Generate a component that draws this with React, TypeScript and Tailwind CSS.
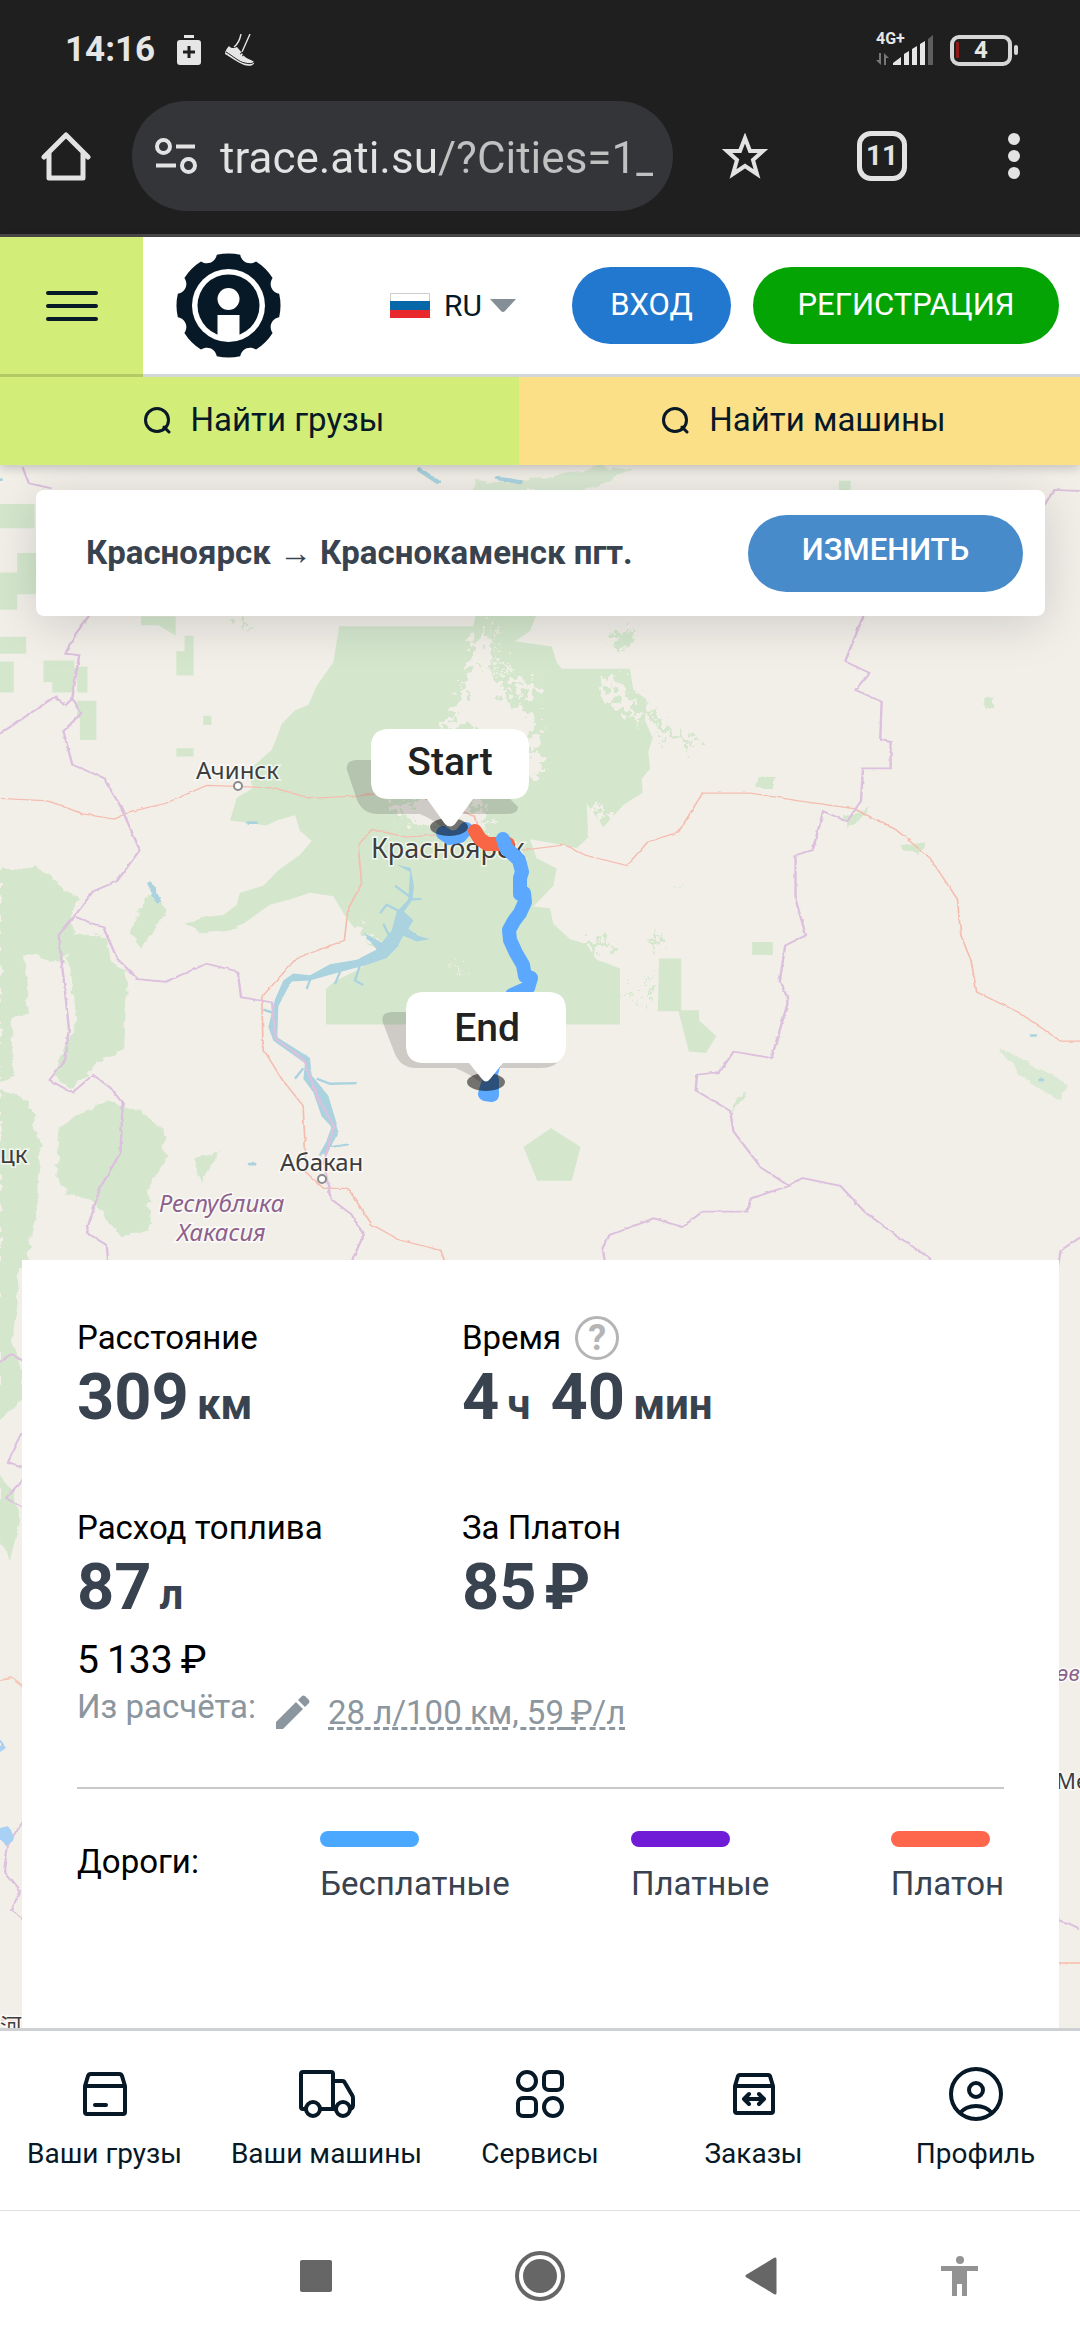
import type { ReactNode } from 'react';

const gearPath = () => {
  const point = (deg: number, r: number) => {
    const a = (deg * Math.PI) / 180;
    return `${(52.5 + r * Math.sin(a)).toFixed(2)} ${(52.5 - r * Math.cos(a)).toFixed(2)}`;
  };
  let d = `M${point(-13, 52)}`;
  for (let i = 0; i < 8; i++) {
    const base = i * 45;
    d += `A52 52 0 0 1 ${point(base + 13, 52)}`;
    d += `C${point(base + 17, 45)} ${point(base + 28, 45)} ${point(base + 32, 52)}`;
  }
  return d + 'Z';
};

const roadTypes = [
  { name: 'Бесплатные', color: 'bg-[#4aa8ff]' },
  { name: 'Платные', color: 'bg-[#701cd6]' },
  { name: 'Платон', color: 'bg-[#ff674d]' },
];

const navItems: { name: string; icon: ReactNode }[] = [
  {
    name: 'Ваши грузы',
    icon: (
      <>
        <path d="M8 20V46a2 2 0 0 0 2 2H46a2 2 0 0 0 2-2V20ZM8 20L11 10a3 3 0 0 1 3-2H42a3 3 0 0 1 3 2L48 20" />
        <path d="M18 39H29" />
      </>
    ),
  },
  {
    name: 'Ваши машины',
    icon: (
      <>
        <path d="M7 43H4a2 2 0 0 1-2-2V8a2 2 0 0 1 2-2H32a2 2 0 0 1 2 2V43H21M34 15H43a3 3 0 0 1 3 2L53 29a5 5 0 0 1 1 3V39a4 4 0 0 1-3 4M37 43H34" />
        <circle cx="14" cy="43" r="7" />
        <circle cx="44" cy="43" r="7" />
      </>
    ),
  },
  {
    name: 'Сервисы',
    icon: (
      <>
        <circle cx="15" cy="15" r="9" />
        <rect x="32" y="6" width="18" height="18" rx="5" />
        <rect x="6" y="32" width="18" height="18" rx="5" />
        <circle cx="41" cy="41" r="9" />
      </>
    ),
  },
  {
    name: 'Заказы',
    icon: (
      <>
        <path d="M9 20V45a2 2 0 0 0 2 2H45a2 2 0 0 0 2-2V20ZM9 20L12 10a2 2 0 0 1 2-1H42a2 2 0 0 1 2 1L47 20" />
        <path d="M18 33H38M23 28L18 33L23 38M33 28L38 33L33 38" />
      </>
    ),
  },
  {
    name: 'Профиль',
    icon: (
      <>
        <circle cx="28" cy="28" r="25" />
        <circle cx="28" cy="24" r="7" />
        <path d="M12 47Q18 40 28 40T44 47" />
      </>
    ),
  },
];

function SearchIcon() {
  return (
    <svg viewBox="0 0 28 28" className="size-7" fill="none" stroke="currentColor" strokeWidth="3" strokeLinecap="round">
      <circle cx="14" cy="14" r="11.500" />
      <path d="M21 21L26 26" />
    </svg>
  );
}

function StatusBar() {
  return (
    <div className="flex h-[100px] items-center pr-[62px] pl-[65px] text-[#e6e6e6]">
      <span className="text-[35px] font-bold">14:16</span>
      <svg viewBox="0 0 24 30" className="ml-[22px] h-[30px] w-6">
        <path fill="currentColor" fillRule="evenodd" d="M7 0H17V3H7ZM3 5H21a3 3 0 0 1 3 3V27a3 3 0 0 1-3 3H3a3 3 0 0 1-3-3V8a3 3 0 0 1 3-3ZM10.500 11V15.500H6V18.500H10.500V23H13.500V18.500H18V15.500H13.500V11Z" />
      </svg>
      <svg viewBox="0 0 30 32" className="ml-6 h-8 w-[30px]" fill="none" stroke="currentColor">
        <path strokeWidth="1.400" d="M16 0C15 5 13 10 9 13M25 0L17 18" />
        <path fill="currentColor" stroke="none" d="M4 12C6 15 10 14 12 13C14 16 17 18 18 21C21 25 28 26 29 28C30 31 24 33 19 31C12 28 5 23 0 20C0 17 2 14 4 12Z" />
        <path stroke="#1f1f1f" strokeWidth="1" d="M1 18C8 22 14 28 20 29C24 30 27 30 29 28M15 20L18 18M17 22L20 20" />
      </svg>

      <div className="ml-auto flex items-center gap-4">
        <div className="relative">
          <svg viewBox="0 0 58 30" className="h-[30px] w-[58px]" fill="currentColor">
            <path fill="#777" d="M3 18H5V30L0 25H3ZM8 30V18L13 23H10V30Z" />
            <path d="M17 30V28L25 22V30ZM28 30V19L33 16V30ZM36 30V14L41 11V30ZM44 30V9L49 6V30Z" />
            <path fill="#5e5e5e" d="M52 30V4L57 0V30Z" />
          </svg>
          <span className="absolute -top-1 left-0 text-base leading-4 font-bold">4G+</span>
        </div>
        <div className="flex items-center gap-0.5">
          <div className="relative flex h-[31px] w-[62px] items-center justify-center rounded-[9px] border-4 border-[#d6d6d6] text-2xl font-bold">
            <span className="absolute left-0.5 h-4 w-[3px] bg-[#8e1a16]" />4
          </div>
          <span className="h-2.5 w-1 rounded-xs bg-[#d6d6d6]" />
        </div>
      </div>
    </div>
  );
}

function BrowserBar() {
  return (
    <div className="flex h-28 items-center text-[#e3e3e3]">
      <button aria-label="Домой" className="flex w-[132px] justify-center">
        <svg viewBox="0 0 50 50" className="size-[50px]" fill="none" stroke="currentColor" strokeWidth="5" strokeLinejoin="round" strokeLinecap="round">
          <path d="M3 26L25 4L47 26M8 22V47H42V22" />
        </svg>
      </button>
      <div className="flex h-[110px] flex-1 items-center rounded-full bg-[#343539] pr-5 pl-[23px]">
        <svg viewBox="0 0 42 36" className="h-9 w-[42px]" fill="none" stroke="currentColor" strokeWidth="4">
          <circle cx="8.500" cy="8.500" r="6.500" />
          <path d="M21 8.500H40M1 27.500H21" />
          <circle cx="33.500" cy="27.500" r="6.500" />
        </svg>
        <input
          aria-label="Адрес"
          defaultValue="trace.ati.su/?Cities=1_"
          className="ml-[23px] w-0 flex-1 bg-[linear-gradient(to_right,#e3e3e3_219px,#bfc2c1_219px)] bg-clip-text pt-1 text-[44px] text-transparent outline-none"
        />
      </div>
      <button aria-label="В закладки" className="flex w-36 justify-center">
        <svg viewBox="0 0 48 46" className="h-[46px] w-12" fill="none" stroke="currentColor" strokeWidth="4">
          <path d="M24 5L29 18H42L32 27L36 41L24 33L12 41L16 27L6 18H19Z" />
        </svg>
      </button>
      <button aria-label="Вкладки" className="flex w-[130px] justify-center">
        <span className="flex size-[50px] items-center justify-center rounded-[14px] border-[5px] border-[#e3e3e3] text-[28px] font-bold">
          11
        </span>
      </button>
      <button aria-label="Меню браузера" className="flex w-[133px] flex-col items-center gap-[5px]">
        <span className="size-3 rounded-full bg-[#e3e3e3]" />
        <span className="size-3 rounded-full bg-[#e3e3e3]" />
        <span className="size-3 rounded-full bg-[#e3e3e3]" />
      </button>
    </div>
  );
}

function SiteHeader() {
  return (
    <header className="relative z-10 shadow-[0_3px_10px_rgba(0,0,0,0.2)]">
      <div className="flex h-[140px] bg-white">
        <button aria-label="Меню" className="flex w-[143px] items-center justify-center border-b-[3px] border-[#b2c966] bg-[#d2ed78]">
          <svg viewBox="0 0 52 32" className="h-8 w-[52px]" stroke="#071826" strokeWidth="4" strokeLinecap="round">
            <path d="M2 3H50M2 16H50M2 29H50" />
          </svg>
        </button>
        <div className="flex flex-1 items-center border-b-[3px] border-[#d4d7d9] pr-[21px] pl-[33px]">
          <a href="#" aria-label="ATI.SU">
            <svg viewBox="0 0 105 105" className="size-[105px]">
              <path fill="#071826" d={gearPath()} />
              <circle cx="52.500" cy="52.500" r="36.500" fill="#fff" />
              <circle cx="52.500" cy="52.500" r="31" fill="#071826" />
              <circle cx="52.500" cy="46" r="11" fill="#fff" />
              <path fill="#fff" d="M41.500 62H63.500V84H41.500Z" />
            </svg>
          </a>
          <label className="relative ml-auto flex items-center">
            <svg viewBox="0 0 40 25" className="h-[25px] w-10">
              <path fill="#fff" stroke="#ccc" d="M0.500 0.500H39.500V24H0.500Z" />
              <path fill="#0768a9" d="M0 8H40V17H0Z" />
              <path fill="#e8282d" d="M0 17H40V25H0Z" />
            </svg>
            <select aria-label="Язык" className="w-[86px] appearance-none bg-transparent pl-3.5 text-[30px] text-[#071826]">
              <option>RU</option>
              <option>EN</option>
            </select>
            <svg viewBox="0 0 26 13" className="pointer-events-none absolute right-0 h-[13px] w-[26px]">
              <path fill="#848e97" d="M0 0H26L15 12Q13 14 11 12Z" />
            </svg>
          </label>
          <button className="ml-14 h-[77px] w-[159px] rounded-full bg-[#2277ce] text-[31px] text-white">ВХОД</button>
          <button className="ml-[22px] h-[77px] w-[306px] rounded-full bg-[#04a404] text-[31px] text-white">
            РЕГИСТРАЦИЯ
          </button>
        </div>
      </div>
      <nav className="grid h-[88px] grid-cols-[519fr_561fr] text-[33px] text-[#071826]">
        <a href="#" className="flex items-center justify-center gap-5 bg-[#d2ed78] pb-0.5 pl-2">
          <SearchIcon />
          Найти грузы
        </a>
        <a href="#" className="flex items-center justify-center gap-5 bg-[#fbe087] pb-0.5 pl-2">
          <SearchIcon />
          Найти машины
        </a>
      </nav>
    </header>
  );
}

function RouteMap() {
  return (
    <svg viewBox="0 465 1080 1563" preserveAspectRatio="xMidYMin slice" className="absolute inset-0 size-full bg-[#f2efe9]">
      <defs>
        <filter id="rough" x="-5%" y="-5%" width="110%" height="110%">
          <feTurbulence type="fractalNoise" baseFrequency="0.05" numOctaves="4" seed="3" result="noise" />
          <feDisplacementMap in="SourceGraphic" in2="noise" scale="16" xChannelSelector="R" yChannelSelector="G" />
        </filter>
        <filter id="ragged" x="-10%" y="-10%" width="120%" height="120%">
          <feTurbulence type="fractalNoise" baseFrequency="0.04" numOctaves="4" seed="5" result="noise" />
          <feDisplacementMap in="SourceGraphic" in2="noise" scale="110" xChannelSelector="R" yChannelSelector="G" />
        </filter>
        <filter id="wobble" x="-5%" y="-5%" width="110%" height="110%">
          <feTurbulence type="fractalNoise" baseFrequency="0.08" numOctaves="2" seed="8" result="noise" />
          <feDisplacementMap in="SourceGraphic" in2="noise" scale="5" xChannelSelector="R" yChannelSelector="G" />
        </filter>
      </defs>

      {/* Central forest and the river valley cutting through it */}
      <g transform="translate(200 600) scale(0.33333 0.34435)">
        <path
          fill="#d4e7cd"
          d="M418 76H820L830 30H1015L990 90L945 120L1055 135L1070 180L1085 200H1290L1300 260L1340 290L1335 350L1358 400L1345 440L1350 490L1325 520L1328 560L1270 595L1210 660L1160 590L1165 690L1130 720L1080 710L990 695L1010 750L1070 780L1060 830L1000 890L1050 895L1060 940L1110 985L1160 1000L1190 1045L1220 1055L1260 1070V1233H378V1130L400 1110L480 1070L560 1020L500 1000L470 960L440 925L400 860L330 850L270 870L210 885L130 940L70 960L0 965V922L70 915L110 885L120 850L190 830L235 785L300 740L335 700L300 670L285 625L230 640L200 655L90 640L110 575L160 545L140 500L215 435L230 400L245 360L285 320L325 305L350 250L400 180Z"
        />
        <g fill="#f2efe9" filter="url(#ragged)">
          <path d="M845 70L875 120L860 190L900 240L930 300L1020 345L1000 400L1030 500L980 530L900 480L860 400L790 360L730 380L770 310L800 240L805 190L820 140Z" />
          <path d="M570 590L700 570L850 600L880 640L830 670L700 665L600 640Z" />
          <path d="M935 235L1010 230L1020 265L950 265ZM900 190L950 200L910 205ZM1200 215L1260 245L1330 350L1250 310L1220 280ZM1180 590L1240 620L1190 660ZM750 1070L790 1075L770 1065ZM370 890L440 930L540 990L450 1000L390 960Z" />
        </g>
        <path fill="none" stroke="#f2efe9" strokeWidth="6" filter="url(#ragged)" d="M880 60L900 150L880 200L920 290L960 320" />
        <g fill="#d4e7cd" filter="url(#ragged)">
          <path d="M1330 280L1380 350L1440 400L1500 410L1480 430L1400 400L1340 340ZM1370 950L1385 1000L1360 1010ZM1360 1060L1350 1150L1330 1170ZM1270 1120L1310 1170L1290 1160ZM1410 845L1470 825L1440 840ZM1120 1000L1200 980L1240 1010L1180 1020ZM1250 80L1300 100L1270 150L1230 120ZM110 60L140 50L150 80Z" />
        </g>
        <path
          fill="#aad3df"
          filter="url(#wobble)"
          d="M590 768L632 778L642 830L638 870L612 905L640 930L625 955L655 975L690 985L650 992L610 975L590 1010L560 1040L500 1060L420 1080L330 1105L275 1108L262 1130L235 1180L232 1270L330 1330L335 1380L385 1440L410 1520L405 1568H380L395 1530L365 1500L340 1430L310 1390L315 1345L220 1280L205 1240L225 1160L250 1105L280 1085L330 1090L390 1058L470 1045L530 1015L490 965L545 995L575 960L590 905L625 870L630 790Z"
        />
        <path
          fill="none"
          stroke="#aad3df"
          strokeWidth="7"
          filter="url(#wobble)"
          d="M585 830L630 862M625 870L665 868M540 910L560 885L600 905M500 980L530 1000M550 940L570 980M420 1080L405 1115M480 1060L465 1105L490 1118M350 1390L390 1405L470 1403M190 1190L225 1200M285 1390L310 1360M335 1090L320 1130"
        />
      </g>

      <g transform="translate(0 460) scale(0.68878 0.51658)">
        {/* Forests */}
        <g fill="#d4e7cd" filter="url(#rough)">
          <path d="M295 888L350 880L345 908L285 915L270 895Z" />
          <path d="M0 790H55L112 850L95 975L35 955L42 1070L15 1080L20 1190L0 1205Z" />
          <path d="M95 915L155 922L160 965L185 1000L180 1140L140 1165L105 1220L80 1190L112 1080Z" />
          <path d="M88 1290L155 1240L205 1260L238 1300L240 1360L215 1410L220 1490L172 1505L140 1440L95 1420L82 1380Z" />
          <path d="M0 1215L40 1240L58 1310L52 1480L34 1568H0Z" />
          <path d="M215 840L245 870L205 950L190 910ZM285 1350L320 1335L290 1400ZM1100 610H1125V635H1100ZM1225 690L1265 670L1235 715ZM1310 745L1345 740L1330 765ZM1432 460H1444V480H1432ZM1070 1235L1085 1225L1065 1265Z" />
          <path d="M690 38L730 45L870 15L920 17L870 52L840 60H690ZM1450 1140L1500 1170L1550 1210L1540 1240L1480 1190Z" opacity="0.800" />
        </g>
        <g fill="#d4e7cd">
          <path d="M0 85H50V132H0ZM25 180H65V260H25V290H0V218H25ZM0 342H38V375H0ZM0 390H20V450H0ZM63 388H108V450H76V430H63ZM112 400H127V450H112ZM112 466H140V542H116V500H112ZM205 303H255V340L230 320H205ZM268 340H281V417H256V370H268ZM295 495H307V513H295ZM256 558H281V574H256ZM1218 40H1235V58H1218Z" />
          <path d="M800 1293L843 1330L830 1395H780L760 1330ZM1092 933H1122V958H1092ZM957 965H989V1065H1015V1085L1040 1115L1025 1148L1000 1145L985 1067H955Z" />
        </g>

        {/* Rivers and lakes */}
        <g fill="none" stroke="#aad3df" filter="url(#wobble)" strokeLinecap="round">
          <path strokeWidth="8" d="M480 1275L487 1300L472 1340M218 820L230 855M608 18L635 42M722 35L755 43" />
          <path strokeWidth="4" d="M480 1330L505 1325M465 1345L480 1310" />
          <path strokeWidth="5" d="M360 702H372M362 1363H370M1498 1114H1502M1510 1200H1514M0 38H2" />
        </g>

        {/* Roads */}
        <g fill="none" stroke="#f5bdaf" strokeWidth="2.500" filter="url(#wobble)">
          <path d="M0 655L70 660L120 685L165 695L190 680L240 665L300 630L345 632L400 635L450 655L520 650L590 640L630 660L690 690L700 735" />
          <path d="M640 725L590 730L540 715L520 745L525 820L505 870L500 930L430 965L380 1040L382 1140L410 1200L440 1250L445 1380L470 1410L505 1410L540 1480L580 1510L640 1530L650 1568" />
          <path d="M700 740L760 755L820 745L850 765L910 785L940 740L985 720L1020 645L1090 645L1160 660L1240 675L1300 715L1350 770L1390 850L1395 920L1410 970L1418 1030L1480 1070L1540 1125H1568" />
        </g>

        {/* Region borders */}
        <g fill="none" stroke="#dcc0dd" strokeWidth="3.500" filter="url(#wobble)">
          <path d="M33 15L42 45L75 55M130 300L108 340L95 375L115 378L105 460L118 490L92 525L105 590L150 615L175 670L203 755L170 815L135 835L110 880L85 920L92 1000L100 1100L95 1160L72 1200L105 1225L135 1190L160 1215L178 1245L175 1340L145 1410L125 1495L155 1520L158 1568" />
          <path d="M0 530L80 458L95 475L105 462M110 885L150 905L170 965L200 1005L240 1010L300 975L345 990L350 1040L395 1050L400 1120L440 1160L460 1230L485 1290L470 1360L480 1430L510 1460L528 1500L505 1568" />
          <path d="M1568 60L1530 58L1515 90M1254 300L1227 390L1262 412L1242 445L1280 468L1278 542L1293 546V597H1253L1250 660L1230 700L1195 680L1180 755L1155 765V850L1170 920L1140 940L1132 1010L1145 1045L1120 1158L1065 1145L1045 1185L1012 1190L1010 1220L1060 1260L1065 1300L1105 1370L1145 1405L1090 1430L1085 1455L1020 1455L990 1485L950 1468L885 1500L875 1525L880 1568M1145 1405L1165 1390L1220 1405L1255 1455L1300 1500L1350 1545L1355 1568M1568 1505L1540 1530L1535 1568" />
        </g>
      </g>

      {/* Map edges beside the summary panel */}
      <g filter="url(#wobble)">
        <path fill="#d4e7cd" d="M0 1255H18V1300L12 1340L22 1370V1400L0 1420ZM0 1475L12 1490L20 1520L10 1560L0 1540Z" />
        <path fill="none" stroke="#dcc0dd" strokeWidth="2" d="M0 1362L10 1355L24 1362M24 1430L8 1462L24 1468M24 1478L6 1498L24 1508M24 1820L8 1845L4 1870L20 1890L12 1910L26 1920M1058 1920L1080 1928" />
        <path fill="none" stroke="#f5c8b8" strokeWidth="2" d="M0 1680L12 1678L24 1688M0 2020L24 2018M1058 1963H1080" />
        <path fill="#a9d0f5" d="M0 1828L10 1826L14 1840L6 1846L0 1840ZM0 1740L6 1748L0 1752Z" />
      </g>

      <g fontFamily="'Noto Sans', sans-serif" fontSize="24" fill="#3d3d3d" stroke="#fff" strokeWidth="3" strokeOpacity="0.700" paintOrder="stroke">
        <text x="196" y="779">Ачинск</text>
        <text x="371" y="858" fontSize="27">Красноярск</text>
        <text x="280" y="1171">Абакан</text>
        <text x="0" y="1163">цк</text>
        <text x="1056" y="1789" fontSize="22">Мө</text>
        <text x="0" y="2034" fontSize="22" fontFamily="'Noto Sans CJK SC', sans-serif">河</text>
        <g fill="#8d618b" fontStyle="italic" fontSize="24">
          <text x="159" y="1212">Республика</text>
          <text x="177" y="1241">Хакасия</text>
          <text x="1056" y="1681" fontSize="22">өв</text>
        </g>
      </g>
      <g fill="#fff" stroke="#8c8c8c" strokeWidth="2">
        <circle cx="238" cy="786" r="4" />
        <circle cx="322" cy="1179" r="4" />
      </g>

      {/* Route */}
      <g fill="none" strokeWidth="14" strokeLinecap="round" strokeLinejoin="round">
        <path stroke="#5ca8ff" d="M443 833L450 838L460 836L466 829" />
        <path stroke="#f86645" d="M475 831L480 839L487 844L508 844" />
        <path stroke="#5ca8ff" d="M503 839L506 848L519 860L522 872L520 878V894L524 893L525 902L520 913L514 921L509 930L510 940L516 953L523 965L525 976L531 978L528 988L512 995L492 1070L485 1094L492 1095V1080" />
      </g>

      {/* Start and end flags */}
      <g fill="#000" fillOpacity="0.150">
        <path d="M371 760H356Q345 761 347 770L357 800Q363 814 378 814H420Q432 819 444 828L462 814H507Q518 814 518 807L510 799H389Q371 796 371 780Z" />
        <path d="M406 1012H391Q380 1013 383 1023L395 1054Q401 1068 416 1068H455Q468 1073 480 1082L492 1068H540Q552 1068 557 1063H424Q406 1060 406 1042Z" />
      </g>
      <g fill="#000" fillOpacity="0.520">
        <ellipse cx="449" cy="827" rx="19" ry="9" />
        <ellipse cx="486" cy="1082" rx="19" ry="9" />
      </g>
      <g fill="#fff">
        <path d="M389 729H511Q529 729 529 747V781Q529 799 511 799H473L455 824Q450 829 445 824L427 799H389Q371 799 371 781V747Q371 729 389 729Z" />
        <path d="M424 992H548Q566 992 566 1010V1045Q566 1063 548 1063H503L490 1079Q486 1084 482 1079L469 1063H424Q406 1063 406 1045V1010Q406 992 424 992Z" />
      </g>
      <g fill="#222" fontFamily="Roboto, sans-serif" fontSize="39" fontWeight="500" textAnchor="middle">
        <text x="450" y="775">Start</text>
        <text x="487" y="1041">End</text>
      </g>
    </svg>
  );
}

function Unit({ children }: { children: ReactNode }) {
  return <span className="ml-2 text-[42px] leading-none">{children}</span>;
}

function Summary() {
  return (
    <div className="mr-[21px] ml-[22px] bg-white px-[55px] pt-[54px] pb-[122px] text-[33px] leading-[44px] text-black">
      <div className="grid grid-cols-[385px_1fr] gap-y-[72px]">
        <div>
          <p className="leading-[48px]">Расстояние</p>
          <p className="text-[65px] leading-[70px] font-bold text-[#38434f]">
            309<Unit>км</Unit>
          </p>
        </div>
        <div>
          <div className="flex items-center leading-[48px]">
            Время
            <button
              aria-label="Подсказка о времени"
              className="ml-3.5 flex size-11 items-center justify-center rounded-full border-[3px] border-[#b5b5b5] text-[36px] font-bold text-[#b5b5b5]"
            >
              ?
            </button>
          </div>
          <p className="text-[65px] leading-[70px] font-bold text-[#38434f]">
            <span className="mr-5">
              4<Unit>ч</Unit>
            </span>
            40<Unit>мин</Unit>
          </p>
        </div>
        <div>
          <p className="leading-[48px]">Расход топлива</p>
          <p className="text-[65px] leading-[70px] font-bold text-[#38434f]">
            87<Unit>л</Unit>
          </p>
        </div>
        <div>
          <p className="leading-[48px]">За Платон</p>
          <p className="text-[65px] leading-[70px] font-bold text-[#38434f]">
            85<span className="ml-2">₽</span>
          </p>
        </div>
      </div>

      <p className="mt-4 text-[39px]">5{'\u2009'}133{'\u2009'}₽</p>
      <div className="mt-[3px] flex items-start text-[#8b969e]">
        Из расчёта:
        <svg viewBox="0 0 34 34" className="mt-2.5 ml-5 size-[34px]" fill="#8b969e">
          <path d="M0 27V34H7L27 14L20 7ZM33 8Q34 7 33 5L29 1Q27 0 26 1L22 5L29 12Z" />
        </svg>
        <a href="#" className="mt-[6px] ml-[18px] underline decoration-dashed decoration-[3px] underline-offset-[3px]">
          28 л/100 км, 59{'\u2009'}₽/л
        </a>
      </div>

      <div className="mt-[52px] flex justify-between border-t-2 border-[#c9c9c9] pt-[42px]">
        <p className="pt-[9px]">Дороги:</p>
        {roadTypes.map((road) => (
          <div key={road.name}>
            <div className={`h-4 w-[99px] rounded-full ${road.color}`} />
            <p className="mt-[15px] text-[#38434f]">{road.name}</p>
          </div>
        ))}
      </div>
    </div>
  );
}

export default function App() {
  return (
    <div className="flex min-h-screen flex-col bg-white font-[Roboto,sans-serif]">
      <div className="border-b-[3px] border-[#4a4849] bg-[#1f1f1f] pb-[22px]">
        <StatusBar />
        <BrowserBar />
      </div>

      <SiteHeader />

      <main className="relative flex flex-1 flex-col justify-between overflow-hidden">
        <RouteMap />
        <div className="relative mt-[25px] mr-[35px] ml-9 flex h-[126px] items-center justify-between rounded-lg bg-white pr-[22px] pl-[50px] shadow-[0_8px_48px_rgba(0,0,0,0.15)]">
          <h1 className="text-[33px] font-bold text-[#38434f]">Красноярск → Краснокаменск пгт.</h1>
          <button className="h-[77px] w-[275px] rounded-full bg-[#478bca] pb-1.5 text-[31px] font-medium text-white">
            ИЗМЕНИТЬ
          </button>
        </div>
        <div className="relative">
          <Summary />
        </div>
      </main>

      <nav className="grid grid-cols-[209fr_235fr_192fr_235fr_209fr] border-t-[3px] border-[#cdd1d4] bg-white pt-[35px] pb-[38px]">
        {navItems.map((item) => (
          <a key={item.name} href="#" className="flex flex-col items-center text-[28px] leading-9 text-[#071826]">
            <svg viewBox="0 0 56 56" className="mb-3.5 size-14" fill="none" stroke="currentColor" strokeWidth="4" strokeLinecap="round" strokeLinejoin="round">
              {item.icon}
            </svg>
            {item.name}
          </a>
        ))}
      </nav>

      <div className="grid h-[130px] grid-cols-[208fr_216fr_232fr_209fr_190fr_25fr] items-center justify-items-center border-t border-[#e0e0e0] bg-white text-[#666]">
        <span />
        <button aria-label="Недавние" className="size-8 rounded-xs bg-[#666]" />
        <button aria-label="Главный экран" className="flex size-[50px] items-center justify-center rounded-full border-4 border-[#666]">
          <span className="size-[34px] rounded-full bg-[#666]" />
        </button>
        <button aria-label="Назад">
          <svg viewBox="0 0 32 38" className="h-[38px] w-8" fill="currentColor" stroke="currentColor" strokeWidth="3" strokeLinejoin="round">
            <path d="M2 19L30 2V36Z" />
          </svg>
        </button>
        <button aria-label="Специальные возможности">
          <svg viewBox="0 0 38 42" className="h-[42px] w-[38px]" fill="#939393">
            <circle cx="19" cy="5" r="4" />
            <path d="M0 11H37V16H26V41H21V29H16V41H11V16H0Z" />
          </svg>
        </button>
      </div>
    </div>
  );
}
